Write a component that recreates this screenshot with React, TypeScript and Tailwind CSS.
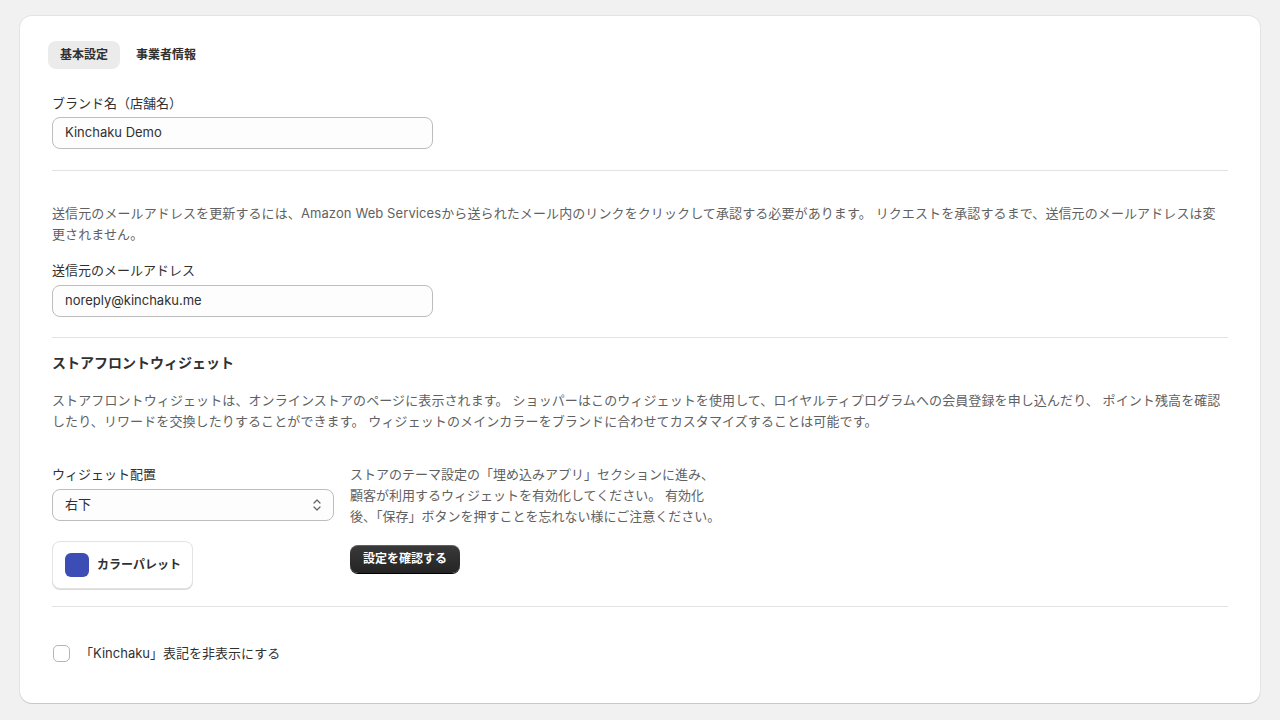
import React from "react";

const font = {
  fontFamily: '"Inter", "Noto Sans CJK JP", sans-serif',
};

export default function App() {
  return (
    <div
      className="min-h-[720px] w-full bg-[#f1f1f1] pt-4 px-5 pb-4"
      style={font}
    >
      <div className="rounded-xl bg-white px-8 pt-[25px] pb-[39px] shadow-[0_1px_0_0_rgba(0,0,0,0.12),0_0_0_1px_rgba(0,0,0,0.05)]">
        {/* tabs */}
        <div className="flex gap-1 -ml-1">
          <button className="h-7 rounded-lg bg-[#ebebeb] px-3 text-xs font-semibold text-[#303030]">
            基本設定
          </button>
          <button className="h-7 rounded-lg px-3 text-xs font-semibold text-[#303030]">
            事業者情報
          </button>
        </div>

        <div className="mt-6">
          <label className="block text-[13px] leading-5 text-[#303030]">
            ブランド名（店舗名）
          </label>
          <div className="mt-1 flex h-8 w-[381px] items-center rounded-lg border border-[#bdbdbd] bg-[#fdfdfd] px-3 text-[13px] text-[#303030]">
            Kinchaku Demo
          </div>
        </div>

        <div className="mt-[21px] border-t border-[#e3e3e3]" />

        <div className="pt-[32px]">
          <p className="text-[13px] leading-[21px] tracking-[0.1px] text-[#616161]">
            送信元のメールアドレスを更新するには、Amazon Web Servicesから送られたメール内のリンクをクリックして承認する必要があります。
            リクエストを承認するまで、送信元のメールアドレスは変更されません。
          </p>
          <label className="mt-[15px] block text-[13px] leading-5 text-[#303030]">
            送信元のメールアドレス
          </label>
          <div className="mt-[5px] flex h-8 w-[381px] items-center rounded-lg border border-[#bdbdbd] bg-[#fdfdfd] px-3 text-[13px] text-[#303030]">
            noreply@kinchaku.me
          </div>
        </div>

        <div className="mt-5 border-t border-[#e3e3e3]" />

        <div className="pt-[15px]">
          <h2 className="text-sm font-bold leading-5 text-[#303030]">
            ストアフロントウィジェット
          </h2>
          <p className="mt-[17px] text-[13px] leading-[21px] tracking-[0.1px] text-[#616161]">
            ストアフロントウィジェットは、オンラインストアのページに表示されます。
            ショッパーはこのウィジェットを使用して、ロイヤルティプログラムへの会員登録を申し込んだり、
            ポイント残高を確認したり、リワードを交換したりすることができます。
            ウィジェットのメインカラーをブランドに合わせてカスタマイズすることは可能です。
          </p>

          <div className="mt-[32px] flex gap-4">
            <div className="w-[282px]">
              <label className="block text-[13px] leading-5 text-[#303030]">
                ウィジェット配置
              </label>
              <div className="mt-[5px] flex h-8 items-center justify-between rounded-lg border border-[#bdbdbd] bg-[#fdfdfd] pl-3 pr-2.5 text-[13px] text-[#303030]">
                <span>右下</span>
                <svg width="12" height="16" viewBox="0 0 12 16" fill="none">
                  <path
                    d="M3 6l3-3 3 3M3 10l3 3 3-3"
                    stroke="#616161"
                    strokeWidth="1.2"
                    strokeLinecap="round"
                    strokeLinejoin="round"
                  />
                </svg>
              </div>
              <button className="mt-5 flex h-12 w-[141px] items-center gap-2 whitespace-nowrap rounded-lg border border-[#e3e3e3] bg-white pl-3 shadow-[0_1px_0_0_rgba(0,0,0,0.15)]">
                <span className="h-6 w-6 shrink-0 rounded-md bg-[#3d4db6]" />
                <span className="text-xs font-semibold text-[#303030]">
                  カラーパレット
                </span>
              </button>
            </div>
            <div>
              <p className="text-[13px] leading-[21px] text-[#616161]">
                ストアのテーマ設定の「埋め込みアプリ」セクションに進み、
                <br />
                顧客が利用するウィジェットを有効化してください。 有効化
                <br />
                後、「保存」ボタンを押すことを忘れない様にご注意ください。
              </p>
              <button className="mt-[18px] h-7 rounded-lg bg-gradient-to-b from-[#3a3a3a] to-[#242424] px-[13px] text-xs font-semibold text-white shadow-[inset_0_1px_0_rgba(255,255,255,0.2),0_1px_0_#000]">
                設定を確認する
              </button>
            </div>
          </div>
        </div>

        <div className="mt-[17px] border-t border-[#e3e3e3]" />

        <label className="mt-[37px] flex items-center gap-2.5 text-[13px] text-[#303030]">
          <span className="ml-px h-[17px] w-[17px] rounded-[5px] border border-[#b5b5b5] bg-white" />
          「Kinchaku」表記を非表示にする
        </label>
      </div>
    </div>
  );
}
